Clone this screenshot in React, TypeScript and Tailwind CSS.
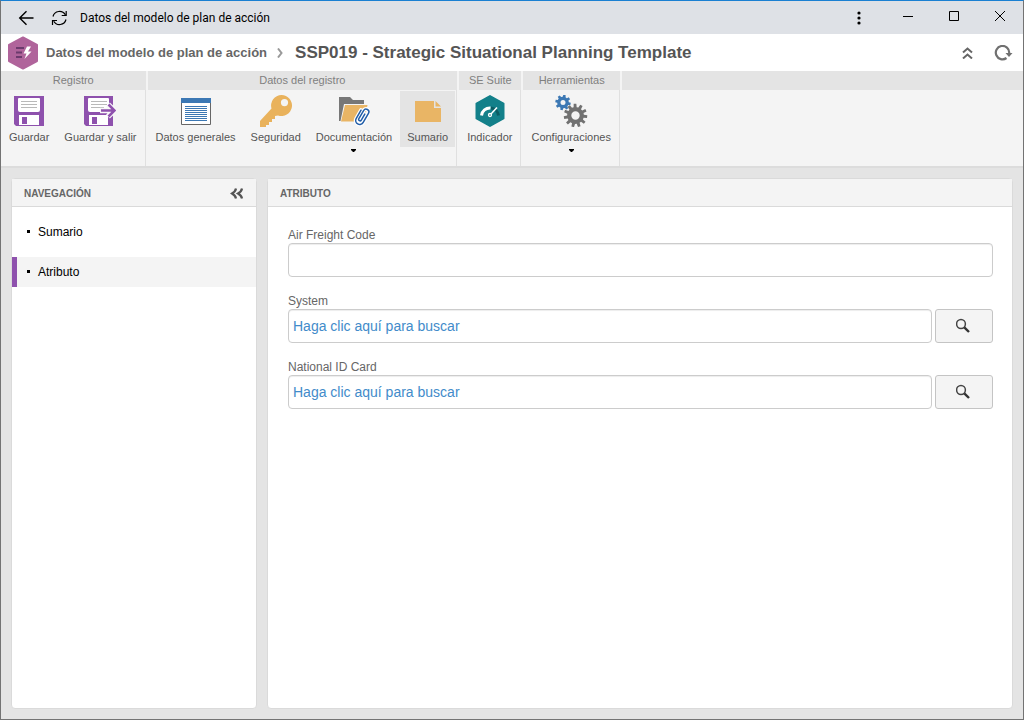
import type { ReactNode } from "react";

function gearPath(cx: number, cy: number, outer: number, inner: number, hole: number, teeth: number, turn: number) {
  const step = (Math.PI * 2) / teeth;
  const points: string[] = [];
  for (let i = 0; i < teeth; i++) {
    const a = i * step + turn;
    const corners: [number, number][] = [
      [inner, -0.32],
      [outer, -0.2],
      [outer, 0.2],
      [inner, 0.32],
    ];
    for (const [r, f] of corners) {
      points.push(`${(cx + r * Math.cos(a + f * step)).toFixed(2)} ${(cy + r * Math.sin(a + f * step)).toFixed(2)}`);
    }
  }
  return `M${points.join("L")}ZM${cx - hole} ${cy}a${hole} ${hole} 0 1 0 ${hole * 2} 0a${hole} ${hole} 0 1 0 ${-hole * 2} 0Z`;
}

function Floppy() {
  return (
    <svg width="32" height="32" viewBox="0 0 32 32" aria-hidden="true">
      <path fill="#8e51ad" d="M1 1h30v30H3l-2-2z" />
      <path fill="#fff" d="M5 4q0-1 1-1h20q1 0 1 1v11q0 2-2 2H7q-2 0-2-2zM6 20h20v10H6z" />
      <path stroke="#b9b9b9" d="M8 6.500h16M8 9.500h16M8 12.500h16" />
      <path fill="#8e51ad" d="M9 22h5v7H9z" />
    </svg>
  );
}

function FloppyExit() {
  return (
    <svg width="32" height="32" viewBox="0 0 32 32" aria-hidden="true">
      <path fill="#8e51ad" d="M0 1h29v30H2l-2-2z" />
      <path fill="#fff" d="M4 4q0-1 1-1h19q1 0 1 1v11q0 2-2 2H6q-2 0-2-2zM5 20h19v10H5z" />
      <path stroke="#b9b9b9" d="M7 6.500h16M7 9.500h16M7 12.500h13" />
      <path fill="#8e51ad" d="M8 22h5v7H8z" />
      <path stroke="#f8f8f8" strokeWidth="5.500" fill="none" d="M16 15.500h14M24 9.500l6.500 6-6.500 6" />
      <path stroke="#8e51ad" strokeWidth="2.600" fill="none" d="M17 15.500h13M24.500 9.500l6 6-6 6" />
    </svg>
  );
}

function SheetIcon() {
  return (
    <svg width="32" height="32" viewBox="0 0 32 32" aria-hidden="true">
      <path fill="#fff" stroke="#666" d="M1.500 3.500h29v26h-29z" />
      <path fill="#3c78b4" d="M1 3h30v5H1z" />
      <path stroke="#3c78b4" d="M5 11.500h22M5 13.500h22M5 15.500h22M5 17.500h22M5 19.500h22M5 21.500h22M5 23.500h22M5 25.500h22" />
    </svg>
  );
}

function KeyIcon() {
  return (
    <svg width="32" height="32" viewBox="0 0 32 32" aria-hidden="true">
      <path
        fill="#e9b25c"
        fillRule="evenodd"
        d="M21.500 0a10.500 10.500 0 0 0-10 13.500L0 26v6h6v-2h3v-3h3v-3h3v-3l3-.6A10.500 10.500 0 1 0 21.500 0zM24.500 4a3.600 3.600 0 1 1 0 7.200 3.600 3.600 0 0 1 0-7.200z"
      />
    </svg>
  );
}

function FolderClipIcon() {
  return (
    <svg width="32" height="32" viewBox="0 0 32 32" aria-hidden="true">
      <path fill="#777" d="M1 2h11l3 3h11v4H6L2.500 26H1z" />
      <path fill="#e9b565" d="M7 10h22.500L26 26.500H3z" />
      <g transform="translate(24 21.500) rotate(30)" fill="none" strokeLinecap="round">
        <path stroke="#fff" strokeWidth="4" d="M-4-5v9.500a4 4 0 0 0 8 0V-6a2.800 2.800 0 0 0-5.600 0v9.500a1.300 1.300 0 0 0 2.800 0v-7" />
        <path stroke="#225ea8" strokeWidth="1.500" d="M-4-5v9.500a4 4 0 0 0 8 0V-6a2.800 2.800 0 0 0-5.600 0v9.500a1.300 1.300 0 0 0 2.800 0v-7" />
      </g>
    </svg>
  );
}

function NoteIcon() {
  return (
    <svg width="32" height="32" viewBox="0 0 32 32" aria-hidden="true">
      <path fill="#e9b565" d="M3 6h19v7h7v14H3zM23.500 6l5.500 5.500h-5.500z" />
    </svg>
  );
}

function GaugeIcon() {
  return (
    <svg width="32" height="32" viewBox="0 0 32 32" aria-hidden="true">
      <path fill="#13808a" stroke="#13808a" strokeWidth="2" strokeLinejoin="round" d="M16 1l13.500 7.500v15L16 31 2.500 23.500v-15z" />
      <path fill="none" stroke="#fff" strokeWidth="3" d="M7.500 20.500a8.500 8.500 0 0 1 9-7.500" />
      <path fill="none" stroke="#0b5c63" strokeWidth="3" d="M17 13a8.500 8.500 0 0 1 7.500 7.500" />
      <path stroke="#fff" strokeWidth="1.500" d="M16 20l7-7.500" />
      <circle cx="16" cy="20" r="1.500" fill="#13808a" stroke="#fff" strokeWidth="1.300" />
    </svg>
  );
}

function GearsIcon() {
  return (
    <svg width="34" height="32" viewBox="0 0 34 32" aria-hidden="true">
      <path fill="#3c78b4" fillRule="evenodd" d={gearPath(9, 7.5, 7.8, 5.8, 2.5, 8, 0.2)} />
      <path fill="#717171" fillRule="evenodd" d={gearPath(21.5, 20.5, 11.8, 8.4, 4.2, 11, 0.1)} />
    </svg>
  );
}

function SearchIcon() {
  return (
    <svg width="16" height="16" viewBox="0 0 16 16" fill="none" aria-hidden="true">
      <circle cx="5" cy="6" r="4.400" stroke="#444" strokeWidth="1.500" />
      <path stroke="#333" strokeWidth="2.400" d="M8.300 9.300l4.700 4.700" />
    </svg>
  );
}

interface Tool {
  label: string;
  icon: ReactNode;
  menu?: boolean;
  selected?: boolean;
}

const groups: { title: string; tools: Tool[] }[] = [
  {
    title: "Registro",
    tools: [
      { label: "Guardar", icon: <Floppy /> },
      { label: "Guardar y salir", icon: <FloppyExit /> },
    ],
  },
  {
    title: "Datos del registro",
    tools: [
      { label: "Datos generales", icon: <SheetIcon /> },
      { label: "Seguridad", icon: <KeyIcon /> },
      { label: "Documentación", icon: <FolderClipIcon />, menu: true },
      { label: "Sumario", icon: <NoteIcon />, selected: true },
    ],
  },
  { title: "SE Suite", tools: [{ label: "Indicador", icon: <GaugeIcon /> }] },
  { title: "Herramientas", tools: [{ label: "Configuraciones", icon: <GearsIcon />, menu: true }] },
];

function ToolButton({ label, icon, menu, selected }: Tool) {
  return (
    <button
      type="button"
      aria-haspopup={menu ? "menu" : undefined}
      aria-pressed={selected}
      className={`flex flex-col items-center px-[7px] pt-1 pb-[3px] text-[11px] leading-[14px] whitespace-nowrap text-[#555] ${selected ? "bg-[#e4e4e4]" : ""}`}
    >
      {icon}
      <span className="mt-[3px]">{label}</span>
      {menu && (
        <svg className="mt-[5px]" width="5" height="3" viewBox="0 0 5 3" aria-hidden="true">
          <path d="M0 0h5v1L3 3H2L0 1z" />
        </svg>
      )}
    </button>
  );
}

function TitleBar() {
  return (
    <div className="flex h-[33px] items-center bg-[#dee1e6] pr-[18px] pl-4 text-black">
      <button type="button" aria-label="Atrás">
        <svg width="17" height="16" viewBox="0 0 17 16" fill="none" stroke="#000" strokeWidth="1.400" aria-hidden="true">
          <path d="M16.500 8H3M9.500 1.200L2.700 8l6.800 6.800" />
        </svg>
      </button>
      <button type="button" aria-label="Recargar" className="ml-[17px]">
        <svg width="17" height="16" viewBox="0 0 17 16" fill="none" stroke="#000" strokeWidth="1.200" aria-hidden="true">
          <path d="M2 6.500a6.700 6.700 0 0 1 12.300-1.700M15 9.500A6.700 6.700 0 0 1 2.700 11.200M15.200 1v4.500h-4.500M1.500 15v-4.500H6" />
        </svg>
      </button>
      <span className="ml-3 flex-1 font-[Roboto,sans-serif] text-xs">Datos del modelo de plan de acción</span>
      <button type="button" aria-label="Más opciones" className="mr-[42px]">
        <svg width="4" height="14" viewBox="0 0 4 14" aria-hidden="true">
          <circle cx="2" cy="2" r="1.600" />
          <circle cx="2" cy="7" r="1.600" />
          <circle cx="2" cy="12" r="1.600" />
        </svg>
      </button>
      <div className="flex gap-9 pb-1">
        <button type="button" aria-label="Minimizar">
          <svg width="10" height="10" viewBox="0 0 10 10" stroke="#000" aria-hidden="true">
            <path d="M0 5.500h10" />
          </svg>
        </button>
        <button type="button" aria-label="Maximizar">
          <svg width="10" height="10" viewBox="0 0 10 10" fill="none" stroke="#000" aria-hidden="true">
            <path d="M.5.500h9v9h-9z" />
          </svg>
        </button>
        <button type="button" aria-label="Cerrar">
          <svg width="10" height="10" viewBox="0 0 10 10" stroke="#000" aria-hidden="true">
            <path d="M0 0l10 10M10 0L0 10" />
          </svg>
        </button>
      </div>
    </div>
  );
}

function PageHeader() {
  return (
    <header className="flex h-[37px] items-center bg-white pr-2.5 pl-[7px]">
      <svg width="30" height="34" viewBox="0 0 30 34" aria-hidden="true">
        <path fill="#b0649b" stroke="#b0649b" strokeWidth="2" strokeLinejoin="round" d="M15 1.500l14 7.500v16L15 32.500 1 25V9z" />
        <path stroke="#6b3a6d" strokeWidth="2" d="M8 12h8M8 16.500h6M8 21h6" />
        <path fill="#fff" d="M19 10.500l-3.500 7h3L16.500 23l7-7.500H20l3-5z" />
      </svg>
      <nav aria-label="Ruta" className="flex flex-1 items-center font-bold whitespace-nowrap">
        <a href="#modelo" className="ml-2 text-[13px] text-[#666]">
          Datos del modelo de plan de acción
        </a>
        <svg className="mr-3 ml-[10px]" width="6" height="10" viewBox="0 0 6 10" fill="none" stroke="#999" strokeWidth="2" aria-hidden="true">
          <path d="M1 .5L4.500 5 1 9.500" />
        </svg>
        <h1 className="text-[17px] text-[#555]">SSP019 - Strategic Situational Planning Template</h1>
      </nav>
      <button type="button" aria-label="Contraer" className="mr-[21px]">
        <svg width="11" height="12" viewBox="0 0 11 12" fill="none" stroke="#666" strokeWidth="2" aria-hidden="true">
          <path d="M1 5.500L5.500 1.500 10 5.500M1 11.500L5.500 7.500 10 11.500" />
        </svg>
      </button>
      <button type="button" aria-label="Actualizar">
        <svg width="19" height="16" viewBox="0 0 19 16" aria-hidden="true">
          <path fill="none" stroke="#707070" strokeWidth="2.200" d="M12.500 13a6.700 6.700 0 1 1 2.700-5" />
          <path fill="#707070" d="M11.500 8h7L15 12z" />
        </svg>
      </button>
    </header>
  );
}

function Ribbon() {
  return (
    <div role="toolbar" aria-label="Herramientas" className="flex gap-0.5 border-b-2 border-[#dcdcdc] bg-[#f4f4f4]">
      {groups.map((g) => (
        <section key={g.title} aria-label={g.title} className="flex flex-col">
          <h2 className="h-[19px] bg-[#e4e4e4] text-center text-[11px] leading-[19px] text-[#808080]">{g.title}</h2>
          <div className="flex h-[76px] items-start gap-px border-r border-[#e0e0e0] px-px pt-px">
            {g.tools.map((t) => (
              <ToolButton key={t.label} {...t} />
            ))}
          </div>
        </section>
      ))}
      <div className="h-[19px] flex-1 bg-[#e4e4e4]" />
    </div>
  );
}

function Panel({ title, action, className, children }: { title: string; action?: ReactNode; className: string; children: ReactNode }) {
  return (
    <section className={`flex flex-col rounded-sm border border-[#dadada] bg-white ${className}`}>
      <div className="flex h-7 items-center justify-between border-b border-[#dadada] bg-[#f4f4f4] px-3 pt-0.5">
        <h2 className="text-[10px] font-bold text-[#666]">{title}</h2>
        {action}
      </div>
      {children}
    </section>
  );
}

function NavItem({ label, active = false }: { label: string; active?: boolean }) {
  return (
    <li>
      <a
        href={`#${label.toLowerCase()}`}
        aria-current={active ? "page" : undefined}
        className={`flex h-[30px] items-center gap-2 border-l-[5px] pl-2.5 text-xs text-black ${active ? "border-[#8e51ad] bg-[#f4f4f4]" : "border-transparent"}`}
      >
        <span className="mb-0.5 size-[3px] bg-black" />
        {label}
      </a>
    </li>
  );
}

const inputStyle =
  "h-[34px] w-full min-w-0 rounded border border-[#ccc] bg-white px-1 text-sm text-[#555] shadow-[inset_0_1px_1px_rgba(0,0,0,0.075)] placeholder:text-[#428bca] placeholder:opacity-100";

function Field({ id, label, search = false }: { id: string; label: string; search?: boolean }) {
  return (
    <div>
      <label htmlFor={id} className="block h-4 text-xs leading-4 text-[#666]">
        {label}
      </label>
      <div className="flex gap-[3px]">
        <input id={id} type="text" placeholder={search ? "Haga clic aquí para buscar" : undefined} className={inputStyle} />
        {search && (
          <button
            type="button"
            aria-label={`Buscar ${label}`}
            className="flex h-[34px] w-[58px] shrink-0 items-center justify-center rounded-[3px] border border-[#c4c4c4] bg-[#f4f4f4]"
          >
            <SearchIcon />
          </button>
        )}
      </div>
    </div>
  );
}

export default function App() {
  return (
    <div className="flex min-h-screen flex-col border border-[#737373] border-t-[#1a80d2] bg-[#e4e4e4] font-['Liberation_Sans',Arial,sans-serif]">
      <TitleBar />
      <PageHeader />
      <Ribbon />
      <main className="flex flex-1 gap-2.5 p-2.5">
        <Panel
          title="NAVEGACIÓN"
          className="w-[246px] shrink-0"
          action={
            <button type="button" aria-label="Ocultar navegación">
              <svg width="14" height="11" viewBox="0 0 14 11" fill="none" stroke="#555" strokeWidth="2.200" aria-hidden="true">
                <path d="M6 .5Q5.500 3.500 2 5.500 5.500 7.500 6 10.500M12 .5Q11.500 3.500 8 5.500 11.500 7.500 12 10.500" />
              </svg>
            </button>
          }
        >
          <ul className="flex flex-col gap-2.5 pt-2.5">
            <NavItem label="Sumario" />
            <NavItem label="Atributo" active />
          </ul>
        </Panel>
        <Panel title="ATRIBUTO" className="min-w-0 flex-1">
          <form className="flex flex-col gap-4 py-5 pr-[19px] pl-5">
            <Field id="air-freight-code" label="Air Freight Code" />
            <Field id="system" label="System" search />
            <Field id="national-id-card" label="National ID Card" search />
          </form>
        </Panel>
      </main>
    </div>
  );
}
